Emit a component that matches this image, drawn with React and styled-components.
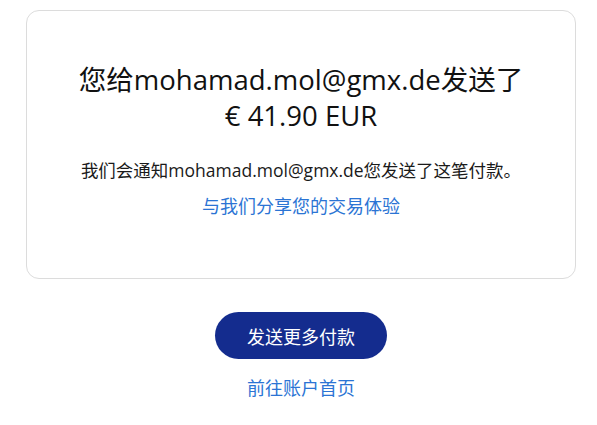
import React from "react";
import styled, { createGlobalStyle } from "styled-components";

const GlobalStyle = createGlobalStyle`
  body {
    margin: 0;
    background: #ffffff;
    font-family: "Open Sans", "Noto Sans CJK SC", sans-serif;
    color: #111111;
  }
`;

const Page = styled.div`
  padding: 10px 21px 0 26px;
  display: flex;
  flex-direction: column;
  align-items: center;
`;

const Card = styled.div`
  box-sizing: border-box;
  width: 100%;
  height: 269px;
  border: 1px solid #dcdcdc;
  border-radius: 13px;
  padding: 51px 20px 0;
  display: flex;
  flex-direction: column;
  align-items: center;
  text-align: center;
`;

const Title = styled.h1`
  margin: 0;
  font-size: 27.5px;
  font-weight: 400;
  line-height: 36px;
  color: #111111;
`;

const Message = styled.p`
  margin: 23px 0 0;
  font-size: 17.5px;
  line-height: 26px;
  color: #1a1a1a;
`;

const TextLink = styled.a`
  display: block;
  margin-top: ${(p) => p.$gap || 0}px;
  font-size: 18px;
  line-height: 26px;
  color: #2b74d4;
  text-decoration: none;
  cursor: pointer;
`;

const PrimaryButton = styled.button`
  margin-top: 33px;
  width: 172px;
  height: 47px;
  border: none;
  border-radius: 24px;
  background: #142c8e;
  color: #ffffff;
  font-family: inherit;
  font-size: 18px;
  cursor: pointer;
`;

export default function App() {
  return (
    <>
      <GlobalStyle />
      <Page>
        <Card>
          <Title>
            您给mohamad.mol@gmx.de发送了
            <br />€ 41.90 EUR
          </Title>
          <Message>我们会通知mohamad.mol@gmx.de您发送了这笔付款。</Message>
          <TextLink $gap={10}>与我们分享您的交易体验</TextLink>
        </Card>
        <PrimaryButton>发送更多付款</PrimaryButton>
        <TextLink $gap={16}>前往账户首页</TextLink>
      </Page>
    </>
  );
}
